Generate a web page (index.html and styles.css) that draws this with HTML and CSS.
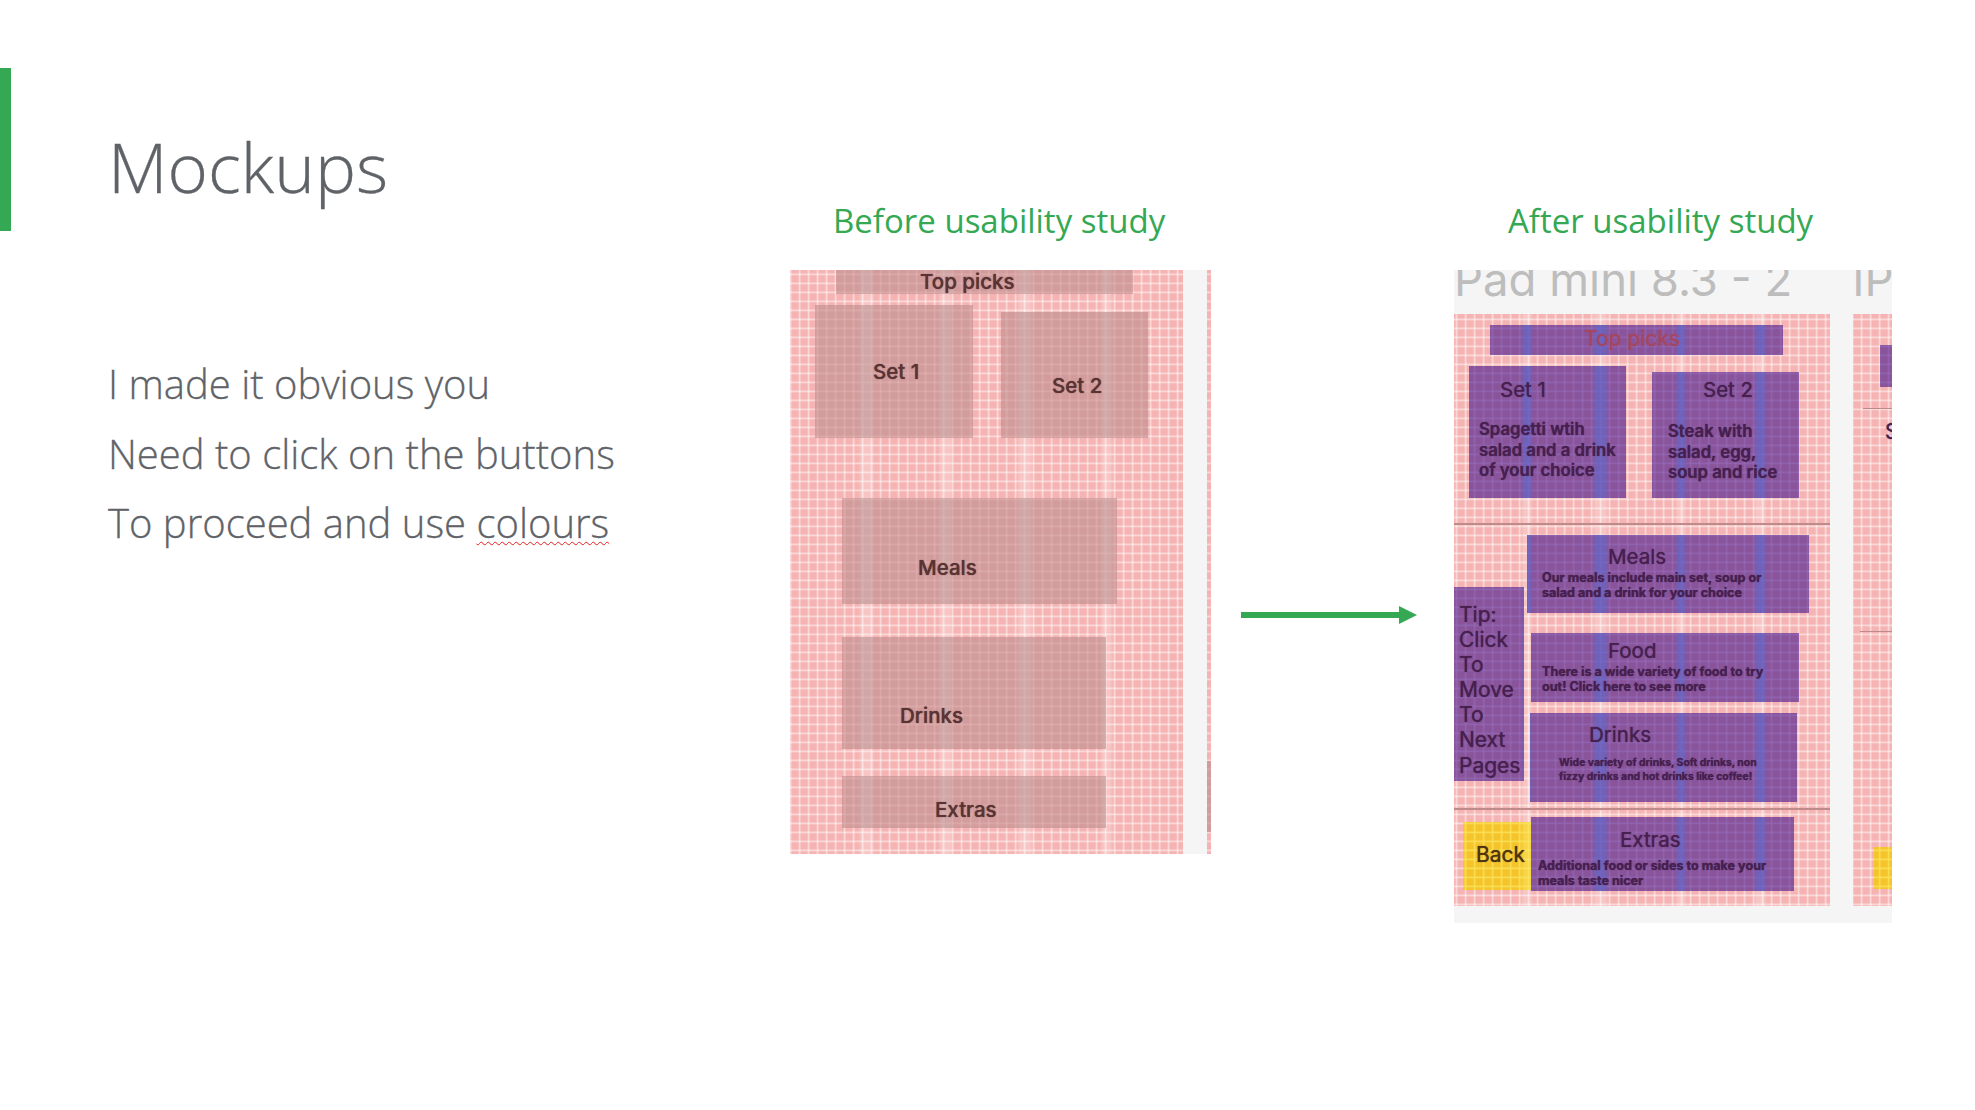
FILE: index.html
```html
<!DOCTYPE html>
<html lang="en">

<head>
    <meta charset="UTF-8">
    <title>Mockups</title>
    <link rel="stylesheet" href="styles.css">
</head>

<body>
    <main class="slide">
        <div class="accent"></div>

        <section class="intro">
            <h1 class="title">Mockups</h1>
            <p class="line">I made it obvious you</p>
            <p class="line">Need to click on the buttons</p>
            <p class="line">To proceed and use <span class="misspelt">colours</span></p>
        </section>

        <figure class="study study-before">
            <figcaption class="caption">Before usability study</figcaption>
            <div class="shot shot-before">
                <div class="screen">
                    <div class="block b-top">Top picks</div>
                    <div class="row">
                        <div class="block b-set1">Set 1</div>
                        <div class="block b-set2">Set 2</div>
                    </div>
                    <div class="block b-meals">Meals</div>
                    <div class="block b-drinks">Drinks</div>
                    <div class="block b-extras">Extras</div>
                </div>
                <div class="screen screen-next">
                    <div class="block b-peek"></div>
                </div>
            </div>
        </figure>

        <svg class="arrow" width="176" height="20" viewBox="0 0 176 20">
            <rect x="0" y="7" width="160" height="6" fill="#34a853" />
            <polygon points="158,1 176,10 158,19" fill="#34a853" />
        </svg>

        <figure class="study study-after">
            <figcaption class="caption">After usability study</figcaption>
            <div class="shot shot-after">
                <div class="frame-names">
                    <span class="frame-name">Pad mini 8.3 - 2</span>
                    <span class="frame-name frame-name-next">IP</span>
                </div>
                <div class="screens">
                    <div class="screen screen-main">
                        <div class="block purple a-top">Top picks</div>
                        <div class="row">
                            <div class="block purple a-set1">
                                <div class="head">Set 1</div>
                                <p class="desc">Spagetti wtih<br>salad and a drink<br>of your choice</p>
                            </div>
                            <div class="block purple a-set2">
                                <div class="head">Set 2</div>
                                <p class="desc">Steak with<br>salad, egg,<br>soup and rice</p>
                            </div>
                        </div>
                        <div class="rule rule-one"></div>
                        <div class="row">
                            <div class="block purple a-tip">Tip:<br>Click<br>To<br>Move<br>To<br>Next<br>Pages</div>
                            <div class="menu">
                                <div class="block purple a-meals">
                                    <div class="head">Meals</div>
                                    <p class="desc">Our meals include main set, soup or<br>salad and a drink for your choice</p>
                                </div>
                                <div class="block purple a-food">
                                    <div class="head">Food</div>
                                    <p class="desc">There is a wide variety of food to try<br>out! Click here to see more</p>
                                </div>
                                <div class="block purple a-drinks">
                                    <div class="head">Drinks</div>
                                    <p class="desc">Wide variety of drinks, Soft drinks, non<br>fizzy drinks and hot drinks like coffee!</p>
                                </div>
                            </div>
                        </div>
                        <div class="rule rule-two"></div>
                        <div class="row">
                            <div class="block yellow a-back">Back</div>
                            <div class="block purple a-extras">
                                <div class="head">Extras</div>
                                <p class="desc">Additional food or sides to make your<br>meals taste nicer</p>
                            </div>
                        </div>
                    </div>
                    <div class="screen screen-side">
                        <div class="block purple p-top"></div>
                        <div class="rule p-rule"></div>
                        <div class="p-letter">S</div>
                        <div class="rule p-rule p-rule-low"></div>
                        <div class="block yellow p-back"></div>
                    </div>
                </div>
            </div>
        </figure>
    </main>
</body>

</html>
```

FILE: styles.css
```css
/* slide */
* {
    box-sizing: border-box;
}

body {
    margin: 0;
    background: #fff;
    font-family: "Open Sans", sans-serif;
}

.slide {
    display: flex;
    align-items: flex-start;
    width: 1975px;
    height: 1110px;
    overflow: hidden;
}

.accent {
    flex: none;
    width: 11px;
    height: 163px;
    margin-top: 68px;
    background-color: #34a853;
}

/* left column */
.intro {
    flex: none;
    width: 779px;
    padding-left: 97px;
    padding-top: 121px;
    color: #5f6368;
    font-weight: 300;
    -webkit-text-stroke: .3px #5f6368;
}

.title {
    margin: 0 0 138px;
    font-size: 69px;
    font-weight: 300;
    line-height: 90px;
}

.line {
    margin: 0;
    font-size: 40px;
    line-height: 69.5px;
    white-space: nowrap;
}

.misspelt {
    text-decoration: underline wavy #e02020 1px;
    text-underline-offset: 3px;
}

/* study columns */
.study {
    flex: none;
    margin: 0;
    padding-top: 270px;
    position: relative;
}

.study-before {
    width: 421px;
}

.study-after {
    width: 438px;
}

.caption {
    position: absolute;
    top: 198px;
    color: #34a853;
    font-size: 33px;
    line-height: 46px;
    white-space: nowrap;
}

.study-before .caption {
    left: 43px;
}

.study-after .caption {
    left: 54px;
}

.arrow {
    flex: none;
    margin: 605px 37px 0 30px;
}

/* the pasted mockups */
.shot {
    font-family: Inter, sans-serif;
    text-shadow: 0 0 1px currentColor;
    background-color: #f5f5f5;
}

.shot-before {
    display: flex;
    height: 584px;
}

.shot-after {
    height: 653px;
}

/* grid overlay: all layers are fixed so they line up across the blocks */
.screen,
.block {
    --lines:
        repeating-linear-gradient(90deg, transparent 0 6.2px, var(--line) 7.2px 8px, transparent 9px),
        repeating-linear-gradient(0deg, transparent 0 6.2px, var(--line) 7.2px 8px, transparent 9px);
    background-image: var(--bands), var(--lines);
    background-attachment: fixed;
}

.shot-before .screen,
.shot-before .block {
    --bands: linear-gradient(90deg,
            transparent 858px, var(--band) 862px, var(--band) 871px, transparent 875px,
            transparent 938px, var(--band) 941px, var(--band) 950px, transparent 953px,
            transparent 1017px, var(--band) 1020px, var(--band) 1030px, transparent 1033px,
            transparent 1100px, var(--band) 1103px, var(--band) 1110px, transparent 1113px);
}

.shot-after .screen,
.shot-after .block {
    --bands: linear-gradient(90deg,
            transparent 1521px, var(--band) 1524px, var(--band) 1530px, transparent 1533px,
            transparent 1592px, var(--band) 1596px, var(--band) 1605px, transparent 1609px,
            transparent 1675px, var(--band) 1678px, var(--band) 1684px, transparent 1687px,
            transparent 1754px, var(--band) 1757px, var(--band) 1764px, transparent 1767px);
}

.screen {
    --line: rgba(255, 255, 255, .48);
    --band: rgba(255, 255, 255, .24);
    background-color: #f6b3b3;
}

.shot-before .screen {
    width: 393px;
    height: 100%;
}

.shot-before .screen-next {
    flex: none;
    width: 4px;
    margin-left: 24px;
    padding-top: 491px;
}

.frame-names {
    display: flex;
    height: 44px;
    overflow: hidden;
    color: #bdbdbd;
    font-size: 45.5px;
    line-height: 44px;
    text-shadow: none;
}

.frame-name {
    margin-top: -12px;
    white-space: nowrap;
}

.frame-name-next {
    margin-left: 60px;
}

.screens {
    display: flex;
}

.screen-main {
    flex: none;
    width: 376px;
    height: 592px;
}

.screen-side {
    flex: none;
    width: 39px;
    height: 592px;
    margin-left: 23px;
    overflow: hidden;
}

.row {
    display: flex;
    align-items: flex-start;
}

.rule {
    height: 2px;
    background-color: #bf8a8a;
}

/* blocks */
.block {
    --line: rgba(240, 200, 200, .25);
    --band: rgba(205, 190, 190, .3);
    flex: none;
    background-color: #d39c9c;
    color: #5a3434;
    font-size: 20.5px;
    font-weight: 500;
    line-height: 24px;
}

.b-top {
    width: 297px;
    height: 24px;
    margin-left: 46px;
    padding-left: 84px;
}

.b-set1 {
    width: 158px;
    height: 133px;
    margin: 11px 0 0 25px;
    padding: 55px 0 0 58px;
}

.b-set2 {
    width: 147px;
    height: 126px;
    margin: 18px 0 0 28px;
    padding: 62px 0 0 51px;
}

.b-meals {
    width: 275px;
    height: 106px;
    margin: 60px 0 0 52px;
    padding: 58px 0 0 76px;
}

.b-drinks {
    width: 264px;
    height: 112px;
    margin: 33px 0 0 52px;
    padding: 67px 0 0 58px;
}

.b-extras {
    width: 264px;
    height: 52px;
    margin: 27px 0 0 52px;
    padding: 22px 0 0 93px;
}

.b-peek {
    height: 71px;
}

.purple {
    --line: rgba(150, 110, 190, .5);
    --band: rgba(95, 105, 205, .6);
    background-color: #89549a;
    color: #47204f;
    font-size: 20.5px;
    font-weight: 400;
}

.yellow {
    --line: rgba(250, 225, 90, .8);
    --band: rgba(250, 230, 100, .5);
    background-color: #f5c42b;
    color: #4f3410;
    font-size: 21px;
    font-weight: 400;
}

.head {
    white-space: nowrap;
}

.desc {
    margin: 0;
    font-weight: 700;
    white-space: nowrap;
}

.a-top {
    width: 293px;
    height: 30px;
    margin: 11px 0 0 36px;
    padding: 2px 0 0 94px;
    color: #a44660;
    font-size: 21px;
}

.a-set1,
.a-set2 {
    height: 132px;
}

.a-set1 .desc,
.a-set2 .desc {
    font-size: 16.7px;
    font-weight: 600;
    line-height: 20.7px;
}

.a-set1 {
    width: 157px;
    margin: 11px 0 0 15px;
    padding: 12px 0 0 10px;
}

.a-set1 .head {
    margin: 0 0 17px 21px;
}

.a-set2 {
    width: 147px;
    height: 126px;
    margin: 17px 0 0 26px;
    padding: 6px 0 0 16px;
}

.a-set2 .head {
    margin: 0 0 19px 35px;
}

.rule-one {
    margin-top: 25px;
}

.a-tip {
    width: 70px;
    height: 194px;
    margin-top: 62px;
    padding: 15px 0 0 5px;
    font-size: 21px;
    line-height: 25.1px;
}

.menu {
    margin: 10px 0 0 3px;
}

.a-meals {
    width: 282px;
    height: 78px;
    padding: 10px 0 0 15px;
}

.a-meals .head {
    margin-left: 66px;
}

.a-meals .desc,
.a-food .desc,
.a-extras .desc {
    font-size: 12.6px;
    line-height: 15px;
    margin-top: 1px;
}

.a-food {
    width: 268px;
    height: 69px;
    margin: 20px 0 0 4px;
    padding: 6px 0 0 11px;
}

.a-food .head {
    margin-left: 66px;
}

.a-drinks {
    width: 267px;
    height: 89px;
    margin: 11px 0 0 3px;
    padding: 10px 0 0 29px;
}

.a-drinks .head {
    margin: 0 0 9px 30px;
}

.a-drinks .desc {
    font-size: 10.4px;
    line-height: 13.5px;
}

.rule-two {
    margin-top: 6px;
}

.a-back {
    width: 68px;
    height: 68px;
    margin: 12px 0 0 9px;
    padding: 21px 0 0 13px;
}

.a-extras {
    width: 263px;
    height: 74px;
    margin: 7px 0 0 0;
    padding: 11px 0 0 7px;
}

.a-extras .head {
    margin-left: 82px;
}

.a-extras .desc {
    margin-top: 6px;
}

/* next frame, cut off by the picture edge */
.p-top {
    width: 12px;
    height: 42px;
    margin: 31px 0 0 27px;
}

.p-rule {
    margin: 21px 0 0 10px;
    height: 1px;
}

.p-letter {
    margin: 10px 0 0 32px;
    color: #47204f;
    font-size: 21px;
    line-height: 26px;
}

.p-rule-low {
    margin-top: 186px;
    margin-left: 7px;
}

.p-back {
    width: 18px;
    height: 42px;
    margin: 215px 0 0 21px;
}
```
